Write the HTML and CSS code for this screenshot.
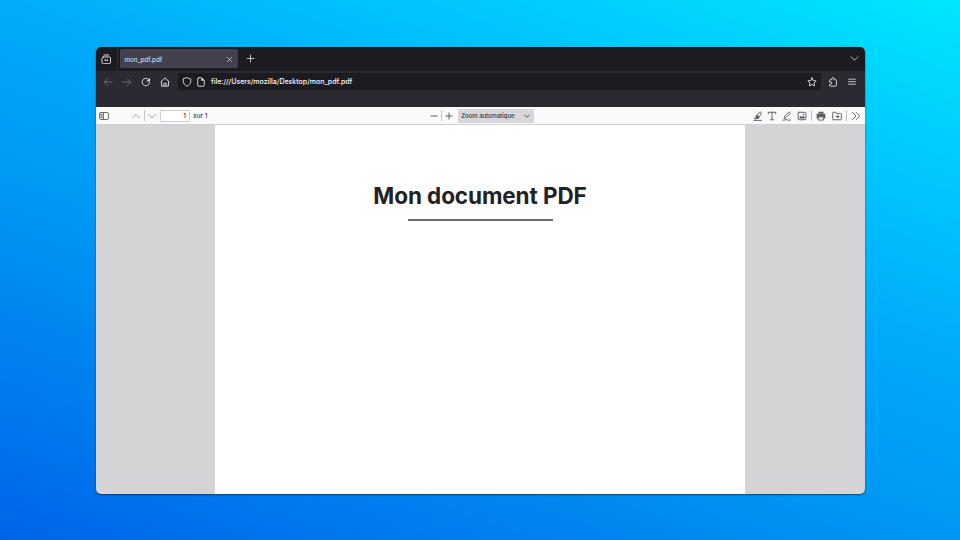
FILE: index.html
```
<!DOCTYPE html>
<html lang="fr">
<head>
<meta charset="utf-8">
<title>mon_pdf.pdf</title>
<link rel="stylesheet" href="styles.css">
</head>
<body>
<div class="window">
  <header class="tabs">
    <div class="view-button"><svg class="icon" viewBox="0 0 16 16"><rect x="1.500" y="4.500" width="13" height="10.300" rx="2"/><path d="M4.500 1.500h7M6 8.500v1.300h4V8.500"/></svg></div>
    <div class="tab"><span>mon_pdf.pdf</span><svg class="icon close" viewBox="0 0 16 16"><path d="M3 3l10 10M13 3L3 13"/></svg></div>
    <svg class="icon new-tab" viewBox="0 0 16 16"><path d="M8 2v12M2 8h12"/></svg>
    <svg class="icon all-tabs" viewBox="0 0 16 16"><path d="M2 5l6 6 6-6"/></svg>
  </header>
  <nav class="navbar">
    <div class="nav-buttons">
      <svg class="icon dim" viewBox="0 0 16 16"><path d="M15 8H2M7.500 2.500L2 8l5.500 5.500"/></svg>
      <svg class="icon dim" viewBox="0 0 16 16"><path d="M1 8h13M8.500 2.500L14 8l-5.500 5.500"/></svg>
      <svg class="icon" viewBox="0 0 16 16"><path d="M13.800 8.800A6 6 0 1 1 12.300 4"/><path class="solid" d="M14.500 1v6h-6z"/></svg>
      <svg class="icon" viewBox="0 0 16 16"><path d="M1.500 7.500L8 1.500l6.500 6M2.500 7v7.500h11V7M6.200 14.500v-4.200h3.600v4.200"/></svg>
    </div>
    <div class="urlbar">
      <svg class="icon shield" viewBox="0 0 16 16"><path d="M8 1.200l6 2.100v3.500c0 3.500-2.500 6.500-6 8-3.500-1.500-6-4.500-6-8V3.300z"/></svg>
      <svg class="icon" viewBox="0 0 16 16"><path d="M4 1.200h5l4.200 4.200v8.200c0 .8-.4 1.200-1.200 1.200H4c-.8 0-1.200-.4-1.200-1.200V2.400c0-.8.400-1.200 1.200-1.200z"/><path class="solid" d="M8.500 1v5h5z"/></svg>
      <span class="address">file:///Users/mozilla/Desktop/mon_pdf.pdf</span>
      <svg class="icon star" viewBox="0 0 16 16"><path d="M8 1.300l2 4.300 4.700.6-3.400 3.200.8 4.800L8 12l-4.100 2.200.8-4.800L1.300 6.200 6 5.600z"/></svg>
    </div>
    <svg class="icon puzzle" viewBox="0 0 16 16"><path d="M2.500 5.500c0-.8.400-1.200 1.200-1.200H6V3a1.900 1.900 0 0 1 3.800 0v1.300h2.400c.8 0 1.200.4 1.200 1.200v8c0 .8-.4 1.200-1.200 1.200H3.700c-.8 0-1.200-.4-1.200-1.200v-2h1.700a1.900 1.900 0 0 0 0-3.800H2.500z"/></svg>
    <svg class="icon menu" viewBox="0 0 16 16"><path d="M2.500 3.500h11M2.500 7.500h11M2.500 11.500h11"/></svg>
  </nav>
  <div class="toolbar">
    <div class="group left">
      <svg class="icon sidebar" viewBox="0 0 16 16"><rect x="1" y="2.500" width="14" height="11" rx="1.500"/><path d="M7 2.500v11M3 5.500h2M3 8h2M3 10.500h2"/></svg>
      <svg class="icon pale" viewBox="0 0 16 16"><path d="M2.500 11L8 5.500l5.500 5.500"/></svg>
      <i class="rule"></i>
      <svg class="icon pale" viewBox="0 0 16 16"><path d="M2.500 5.500L8 11l5.500-5.500"/></svg>
      <span class="page-number">1</span><span class="page-count">sur 1</span>
    </div>
    <div class="group middle">
      <svg class="icon" viewBox="0 0 16 16"><path d="M3 8h10"/></svg>
      <i class="rule"></i>
      <svg class="icon" viewBox="0 0 16 16"><path d="M3 8h10M8 3v10"/></svg>
      <div class="zoom"><span>Zoom automatique</span><svg class="icon" viewBox="0 0 16 16"><path d="M3.500 6L8 10.500 12.500 6"/></svg></div>
    </div>
    <div class="group right">
      <svg class="icon" viewBox="0 0 16 16"><path d="M1.500 15h12M5 8.500l5.500-6.700c1.200-1 3.600.9 2.700 2.400L8.500 11.500 5 12zM5 8.500l3.500 3M2.500 12.300H5"/><path class="solid" d="M6.800 6.500l3.200 2.500-1.500 2.500L5 12V8.500z"/></svg>
      <svg class="icon" viewBox="0 0 16 16"><path d="M2.200 4.500V2h11.600v2.500M8 2v12M5.800 14h4.400"/></svg>
      <svg class="icon" viewBox="0 0 16 16"><path d="M3.500 11.500l.8-3.200 6.200-6.300c1.200-1 3.300 1 2.300 2.300L6.700 10.500zM1.500 14.500H4l2.500-1.200 1.500 1.200h5.500"/></svg>
      <svg class="icon" viewBox="0 0 16 16"><rect x="1.800" y="2" width="12.400" height="12" rx="1.500"/><path class="solid" d="M4 12V9.500l2-2 2 2L10.500 7l1.700 2.500V12zM9 4.500h2v2H9z"/></svg>
      <i class="rule"></i>
      <svg class="icon" viewBox="0 0 16 16"><path class="solid" d="M4 1h8v3H4zM2.500 4.500h11c1 0 1.500.5 1.500 1.500V12h-2.500V9h-9v3H1V6c0-1 .5-1.500 1.500-1.500z"/><path d="M4.200 9.500h7.600v5H4.200z"/></svg>
      <svg class="icon folder" viewBox="0 0 16 16"><path d="M1 3.200c0-.8.400-1.200 1.200-1.200h4l1.500 2h6c.8 0 1.300.5 1.300 1.200v7.600c0 .7-.5 1.200-1.300 1.200H2.200c-.8 0-1.200-.5-1.200-1.200zM6.500 9H10"/><path class="solid" d="M8.500 6l3.700 3-3.700 3z"/></svg>
      <i class="rule"></i>
      <svg class="icon" viewBox="0 0 16 16"><path d="M2.500 2.500L8 8l-5.500 5.500M8.500 2.500L14 8l-5.500 5.500"/></svg>
    </div>
  </div>
  <main class="viewer">
    <article class="page"><h1>Mon document PDF</h1><hr></article>
  </main>
</div>
</body>
</html>
```

FILE: styles.css
```
* { box-sizing: border-box; }
body {
  margin: 0;
  width: 960px;
  height: 540px;
  padding: 47px 95.500px 46.500px;
  overflow: hidden;
  font-family: Inter, "Liberation Sans", sans-serif;
  font-weight: 500;
  background: linear-gradient(20deg, #0064e9 0%, #0097f4 39%, #00abfa 60%, #00e6ff 100%);
}
.window {
  display: flex;
  flex-direction: column;
  height: 446.500px;
  border-radius: 5px;
  overflow: hidden;
  background: #d4d4d6;
  box-shadow: 0 1px 2px rgba(0, 20, 60, .6);
}
.icon {
  flex: none;
  width: 10px;
  height: 10px;
  fill: none;
  stroke: currentColor;
  stroke-width: 1.500;
  stroke-linejoin: round;
  stroke-linecap: round;
}
.icon .solid { fill: currentColor; stroke: none; }
.tabs {
  display: flex;
  align-items: center;
  flex: none;
  height: 23.500px;
  background: #1c1b22;
  color: #dcdce0;
}
.view-button {
  display: flex;
  width: 22.500px;
  height: 100%;
  align-items: center;
  padding-left: 5px;
  border-right: 1px solid #302f38;
}
.view-button .icon { width: 10.500px; height: 10.500px; }
.tab {
  display: flex;
  align-items: center;
  justify-content: space-between;
  width: 118px;
  height: 19px;
  margin-left: 2px;
  padding: 1px 5px 0 4.500px;
  border-radius: 2px;
  background: #42414d;
  font-size: 6.200px;
}
.close { width: 7px; height: 7px; }
.new-tab { width: 9px; height: 9px; margin-left: 7.500px; }
.all-tabs { width: 9px; height: 9px; margin-left: auto; margin-right: 6px; }
.navbar {
  display: flex;
  align-items: flex-start;
  flex: none;
  height: 36.500px;
  padding-top: 2.500px;
  background: #2b2a33;
  color: #dcdce0;
}
.nav-buttons {
  display: flex;
  align-items: center;
  gap: 9.200px;
  height: 17px;
  width: 82.500px;
  padding-left: 7.400px;
}
.dim { color: #6b6a73; }
.urlbar {
  display: flex;
  align-items: center;
  width: 643px;
  height: 17px;
  padding: 0 4px 0 3.500px;
  border-radius: 2px;
  background: #1c1b22;
}
.shield { margin-right: 4.500px; }
.address { margin-left: 5px; font-size: 7px; color: #fbfbfe; }
.star { margin-left: auto; }
.puzzle { margin: 3.500px 0 0 7px; }
.menu { margin: 3.500px 0 0 9px; color: #c8c8cd; }
.toolbar {
  display: flex;
  align-items: center;
  flex: none;
  height: 18px;
  padding-top: .5px;
  background: #f9f9fa;
  border-bottom: 1px solid #d0d0d2;
  color: #5b5b60;
}
.group { display: flex; align-items: center; height: 100%; }
.rule { flex: none; width: 1px; height: 11px; background: #c3c3c6; }
.left { width: 333px; padding-left: 3.200px; }
.sidebar { margin-right: 22.800px; }
.pale { color: #a0a0a4; margin-right: 2.200px; }
.rule + .pale { margin: 0 3px 0 2.200px; }
.page-number {
  width: 30px;
  height: 12px;
  padding-right: 3px;
  border: 1px solid #cfcfd2;
  border-radius: 1px;
  background: #fff;
  color: #303035;
  font-size: 6.300px;
  line-height: 10px;
  text-align: right;
}
.page-count { margin-left: 3.500px; color: #38383d; font-size: 6.300px; }
.middle { gap: 2.500px; }
.middle .rule + .icon { margin-left: -.5px; }
.zoom {
  display: flex;
  align-items: center;
  justify-content: space-between;
  width: 75.500px;
  height: 14px;
  margin-left: 1.800px;
  padding: 0 3px;
  background: #d7d7db;
  color: #303035;
  font-size: 5.950px;
}
.zoom .icon { width: 8px; height: 8px; }
.right { margin-left: auto; gap: 4.800px; padding-right: 3.500px; }
.right .rule { margin: 0 -1.100px 0 -.5px; }
.folder { margin-left: 1.200px; }
.viewer { display: flex; flex: 1; justify-content: center; }
.page { width: 530px; padding-top: 54.500px; background: #fff; text-align: center; }
h1 { margin: 0; color: #222224; font-size: 22.500px; line-height: 32px; font-weight: 700; letter-spacing: -.1px; }
hr { width: 145px; height: 1.500px; margin: 7.500px auto 0; border: 0; background: #6a6a6c; }
```
